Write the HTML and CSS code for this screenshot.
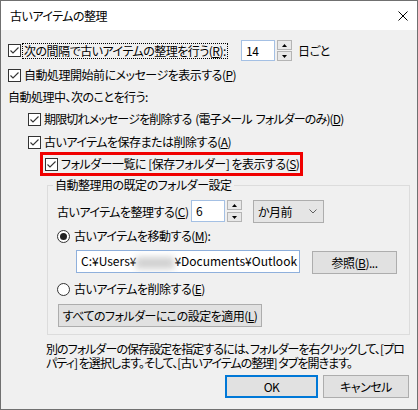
FILE: index.html
```html
<!DOCTYPE html>
<html lang="ja">
<head>
<meta charset="utf-8">
<title>古いアイテムの整理</title>
<link rel="stylesheet" href="styles.css">
</head>
<body>
<div class="window">
  <div class="titlebar">
    <span class="title">古いアイテムの整理</span>
    <svg class="close" width="10" height="10" viewBox="0 0 10 10"><path d="M0.5 0.5L9.5 9.5M9.5 0.5L0.5 9.5" stroke="#000" stroke-width="1" fill="none"/></svg>
  </div>
  <div class="content">
    <div class="row r1">
      <div class="lab1">
        <svg class="cb cb1" width="13" height="13" viewBox="0 0 13 13"><rect x="0.5" y="0.5" width="12" height="12" fill="#fff" stroke="#333"/><path d="M2.5 6.5L5 9L10.5 3.5" fill="none" stroke="#333" stroke-width="1.1"/></svg>
        <span class="focus">次の間隔で古いアイテムの整理を行う(<u>R</u>):</span>
      </div>
      <span class="field f14">14</span>
      <span class="spin">
        <span class="sb"><svg width="5" height="3" viewBox="0 0 5 3"><path d="M2.5 0L5 3H0Z" fill="#000"/></svg></span>
        <span class="sb"><svg width="5" height="3" viewBox="0 0 5 3"><path d="M0 0H5L2.5 3Z" fill="#000"/></svg></span>
      </span>
      <span class="unit">日ごと</span>
    </div>
    <div class="row r2">
      <svg class="cb" width="13" height="13" viewBox="0 0 13 13"><rect x="0.5" y="0.5" width="12" height="12" fill="#fff" stroke="#333"/><path d="M2.5 6.5L5 9L10.5 3.5" fill="none" stroke="#333" stroke-width="1.1"/></svg>
      <span>自動処理開始前にメッセージを表示する(<u>P</u>)</span>
    </div>
    <div class="row r3">
      <span>自動処理中、次のことを行う:</span>
    </div>
    <div class="row r4">
      <svg class="cb" width="13" height="13" viewBox="0 0 13 13"><rect x="0.5" y="0.5" width="12" height="12" fill="#fff" stroke="#333"/><path d="M2.5 6.5L5 9L10.5 3.5" fill="none" stroke="#333" stroke-width="1.1"/></svg>
      <span class="tight">期限切れメッセージを削除する (電子メール フォルダーのみ)(<u>D</u>)</span>
    </div>
    <div class="row r5">
      <svg class="cb" width="13" height="13" viewBox="0 0 13 13"><rect x="0.5" y="0.5" width="12" height="12" fill="#fff" stroke="#333"/><path d="M2.5 6.5L5 9L10.5 3.5" fill="none" stroke="#333" stroke-width="1.1"/></svg>
      <span>古いアイテムを保存または削除する(<u>A</u>)</span>
    </div>
    <div class="row r6">
      <div class="highlight">
        <svg class="cb" width="13" height="13" viewBox="0 0 13 13"><rect x="0.5" y="0.5" width="12" height="12" fill="#fff" stroke="#333"/><path d="M2.5 6.5L5 9L10.5 3.5" fill="none" stroke="#333" stroke-width="1.1"/></svg>
        <span>フォルダー一覧に [保存フォルダー] を表示する(<u>S</u>)</span>
      </div>
    </div>
    <fieldset class="group">
      <legend>自動整理用の既定のフォルダー設定</legend>
      <div class="row g1">
        <span class="lab2">古いアイテムを整理する(<u>C</u>)</span>
        <span class="field f6">6</span>
        <span class="spin">
          <span class="sb"><svg width="5" height="3" viewBox="0 0 5 3"><path d="M2.5 0L5 3H0Z" fill="#000"/></svg></span>
          <span class="sb"><svg width="5" height="3" viewBox="0 0 5 3"><path d="M0 0H5L2.5 3Z" fill="#000"/></svg></span>
        </span>
        <span class="combo"><span>か月前</span><svg width="8" height="5" viewBox="0 0 8 5"><path d="M0.5 0.5L4 4L7.5 0.5" stroke="#606060" fill="none"/></svg></span>
      </div>
      <div class="row g2">
        <svg class="rb" width="13" height="13" viewBox="0 0 13 13"><circle cx="6.5" cy="6.5" r="6" fill="#fff" stroke="#333"/><circle cx="6.5" cy="6.5" r="3.5" fill="#222"/></svg>
        <span>古いアイテムを移動する(<u>M</u>):</span>
      </div>
      <div class="row g3">
        <span class="field path"><span class="pathtext">C:¥Users¥<span class="blur"></span>¥Documents¥Outlook</span></span>
        <span class="btn browse">参照(<u>B</u>)...</span>
      </div>
      <div class="row g4">
        <svg class="rb" width="13" height="13" viewBox="0 0 13 13"><circle cx="6.5" cy="6.5" r="6" fill="#fff" stroke="#333"/></svg>
        <span>古いアイテムを削除する(<u>E</u>)</span>
      </div>
      <div class="row g5">
        <span class="btn apply">すべてのフォルダーにこの設定を適用(<u>L</u>)</span>
      </div>
    </fieldset>
    <p class="note">別のフォルダーの保存設定を指定するには、フォルダーを右クリックして、[プロ<br>パティ] を選択します。そして、[古いアイテムの整理] タブを開きます。</p>
    <div class="buttons">
      <span class="btn ok">OK</span>
      <span class="btn cancel">キャンセル</span>
    </div>
  </div>
</div>
</body>
</html>
```

FILE: styles.css
```css
* { box-sizing: border-box; }
html, body { margin: 0; padding: 0; }
body {
  width: 418px;
  height: 410px;
  overflow: hidden;
  background: #f0f0f0;
  color: #000;
  font-family: "Noto Sans CJK JP", "Noto Sans", sans-serif;
  font-size: 12px;
  letter-spacing: -0.5px;
  font-feature-settings: "palt";
}
u { text-decoration: underline; text-underline-offset: 1px; }

.window {
  width: 418px;
  height: 410px;
  border: 1px solid #707070;
  background: #f0f0f0;
  display: flex;
  flex-direction: column;
}
.titlebar {
  flex: none;
  height: 29px;
  background: #fff;
  display: flex;
  align-items: center;
  justify-content: space-between;
  padding: 0 9px;
}
.title { line-height: 14px; }
.close { display: block; }

.content { flex: 1; padding: 0 7px; }

.row {
  display: flex;
  align-items: center;
  line-height: 14px;
  white-space: nowrap;
}
.cb, .rb { flex: none; display: block; margin-right: 3px; }
.rb { margin-right: 4px; }
.tight { letter-spacing: -0.85px; word-spacing: 2px; }

.r1 { margin-top: 10px; height: 21px; }
.lab1 { width: 233px; display: flex; align-items: center; flex: none; }
.cb1 { margin-right: 1px; }
.focus { border: 1px dotted #000; padding: 0 1px; line-height: 14px; }
.r2 { margin-top: 3px; height: 22px; }
.r3 { height: 22px; }
.r4 { height: 22px; padding-left: 20px; }
.r5 { margin-top: 2px; height: 20px; padding-left: 20px; }
.r6 { height: 24px; padding-left: 32px; align-items: stretch; }
.highlight {
  display: flex;
  align-items: center;
  border: 3px solid #f00000;
  padding: 0 1px 0 2px;
}

.field {
  flex: none;
  display: flex;
  align-items: center;
  background: #fff;
  border: 1px solid #a4c0e4;
  padding-left: 4px;
  overflow: hidden;
}
.f14 { width: 34px; height: 21px; }
.f6 { width: 34px; height: 22px; }
.spin {
  flex: none;
  width: 15px;
  margin-left: 2px;
  display: flex;
  flex-direction: column;
  justify-content: space-between;
  align-self: stretch;
}
.sb {
  height: 10px;
  border: 1px solid #b4b4b4;
  background: #e8e8e8;
  display: flex;
  align-items: center;
  justify-content: center;
}
.sb svg { display: block; }
.r1 .spin { height: 21px; }
.unit { margin-left: 6px; }

.group {
  margin: 2px 0 0 39px;
  width: 363px;
  min-width: 0;
  border: 1px solid #dcdcdc;
  padding: 8px 0 7px 9px;
}
.group legend {
  padding: 0 2px;
  margin-left: -4px;
  line-height: 14px;
}
.g1 { height: 23px; align-items: stretch; }
.g1 .lab2 { width: 134px; flex: none; display: flex; align-items: center; }
.g1 .spin { height: 22px; }
.combo {
  flex: none;
  width: 71px;
  height: 23px;
  margin-left: 11px;
  border: 1px solid #adadad;
  background: #e5e5e5;
  display: flex;
  align-items: center;
  justify-content: space-between;
  padding: 0 6px 0 4px;
}
.combo svg { display: block; }
.g2 { margin-top: 3px; height: 20px; }
.g3 { margin-top: 4px; height: 24px; padding-left: 19px; align-items: flex-start; }
.path { width: 224px; height: 23px; border-color: #8fb0dc; }
.pathtext { white-space: nowrap; letter-spacing: 0; }
.blur {
  display: inline-block;
  vertical-align: middle;
  width: 38px;
  height: 12px;
  background: #d2d2d2;
  filter: blur(3px);
}
.btn {
  flex: none;
  height: 23px;
  border: 1px solid #adadad;
  background: #e1e1e1;
  display: flex;
  align-items: center;
  justify-content: center;
  line-height: 14px;
}
.browse { width: 85px; margin-left: 12px; margin-top: 1px; }
.g4 { margin-top: 5px; height: 20px; }
.g5 { margin-top: 5px; height: 23px; }
.apply { width: 204px; margin-left: 1px; }

.note {
  margin: 7px 0 0 38px;
  line-height: 14px;
  white-space: nowrap;
  letter-spacing: -0.95px;
}
.buttons {
  display: flex;
  justify-content: flex-end;
  gap: 5px;
  margin-top: 5px;
  padding-right: 1px;
}
.ok { width: 93px; border: 2px solid #0078d7; }
.cancel { width: 86px; }
```
